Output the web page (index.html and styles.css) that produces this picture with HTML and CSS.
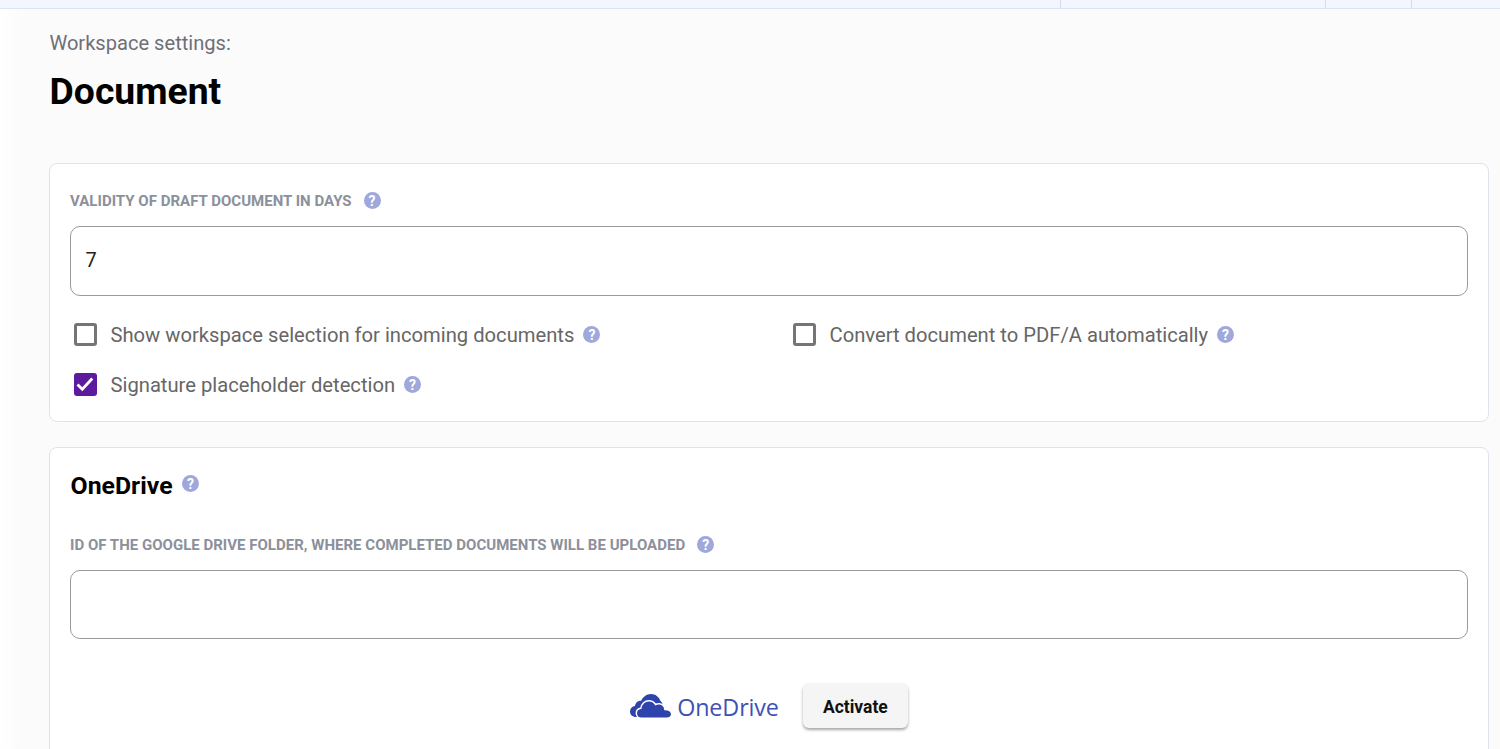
FILE: index.html
```html
<!DOCTYPE html>
<html lang="en">
<head>
<meta charset="utf-8">
<title>Workspace settings: Document</title>
<link rel="stylesheet" href="styles.css">
</head>
<body>
<header class="topbar">
  <div class="topbar-fill"></div>
  <div class="topbar-cell topbar-wide"></div>
  <div class="topbar-cell topbar-narrow"></div>
  <div class="topbar-cell topbar-end"></div>
</header>
<main class="page">
  <p class="eyebrow">Workspace settings:</p>
  <h1 class="title">Document</h1>

  <section class="card card-general">
    <div class="field-label"><span>VALIDITY OF DRAFT DOCUMENT IN DAYS</span><span class="help">?</span></div>
    <div class="input input-days">7</div>
    <div class="options">
      <div class="option"><span class="check"></span><span class="option-text">Show workspace selection for incoming documents</span><span class="help">?</span></div>
      <div class="option"><span class="check"></span><span class="option-text">Convert document to PDF/A automatically</span><span class="help">?</span></div>
      <div class="option">
        <span class="check check-on"><svg viewBox="0 0 23 23" width="23" height="23"><path d="M3.500 11.500l4.800 4.800 10-10.800" fill="none" stroke="#fff" stroke-width="2.800"/></svg></span>
        <span class="option-text">Signature placeholder detection</span><span class="help">?</span>
      </div>
    </div>
  </section>

  <section class="card card-drive">
    <div class="card-heading"><h2 class="card-title">OneDrive</h2><span class="help help-raised">?</span></div>
    <div class="field-label"><span>ID OF THE GOOGLE DRIVE FOLDER, WHERE COMPLETED DOCUMENTS WILL BE UPLOADED</span><span class="help">?</span></div>
    <div class="input input-folder"></div>
    <div class="activate-row">
      <div class="logo">
        <svg class="logo-cloud" viewBox="0 0 42 25" width="42" height="25">
          <path fill="#2f43ad" d="M6 23c-3.400 0-6-2.300-6-5.500 0-2.900 2.100-5 5-5.400C5.300 8.700 8 6.500 11.200 6.800 13 2.800 16.500 0 21 0c4.500 0 8 2.800 9.300 6.800 1.500 1 2.500 3 2.500 5L20 23z"/>
          <path fill="#2f43ad" stroke="#fff" stroke-width="1.500" d="M11.500 24.300c-2.900 0-5.200-2.200-5.200-5 0-2.600 1.900-4.700 4.500-5 .4-4.300 3.800-7.500 8-7.500 2.800 0 5.300 1.400 6.800 3.700 1.200-.7 2.500-.9 3.800-.7 3 .4 5.200 2.700 5.500 5.600 3.600-.2 6.800 1.800 6.800 4.700 0 2.500-2 4.200-5 4.200z"/>
        </svg>
        <span class="logo-text">OneDrive</span>
      </div>
      <button class="activate" type="button">Activate</button>
    </div>
  </section>
</main>
</body>
</html>
```
FILE: styles.css
```css
* { box-sizing: border-box; }
html, body { margin: 0; height: 749px; overflow: hidden; }
body {
  background: linear-gradient(90deg, #ffffff 0, #fbfbfb 24px);
  font-family: Roboto, "Liberation Sans", sans-serif;
}
.topbar {
  display: flex;
  height: 9px;
  background: #f3f6fe;
  border-bottom: 1px solid #dbe3f6;
}
.topbar-fill { width: 1060px; }
.topbar-cell { border-left: 1px solid #d8dce8; }
.topbar-wide { width: 265px; }
.topbar-narrow { width: 86px; }
.topbar-end { flex: 1; }
.page { padding: 0 11px 0 49px; }
.eyebrow {
  margin: 0;
  padding: 23px 0 0 .4px;
  font-size: 20.100px;
  line-height: 22px;
  color: #6f6f78;
}
.title {
  margin: 15px 0 0;
  padding-left: .6px;
  font-size: 37.300px;
  line-height: 44px;
  font-weight: 700;
  color: #000;
}
.card {
  background: #fff;
  border: 1px solid #dfe3f0;
  border-radius: 8px;
  padding: 0 20px;
}
.card-general { margin-top: 50px; height: 259px; padding-top: 26px; }
.card-drive { margin-top: 25px; height: 320px; padding-top: 22px; }
.field-label {
  display: flex;
  align-items: center;
  gap: 12px;
  height: 20px;
  padding-top: 1px;
  font-size: 15px;
  font-weight: 700;
  color: #8c909b;
  letter-spacing: .014px;
}
.help {
  display: inline-flex;
  align-items: center;
  justify-content: center;
  flex: none;
  width: 17px;
  height: 17px;
  border-radius: 50%;
  background: #9fa8da;
  color: #fff;
  font-size: 14px;
  font-weight: 700;
  line-height: 1;
}
.input {
  border: 1px solid #9a9a9a;
  border-radius: 10px;
  background: #fff;
  padding: 0 14px 2px 14.600px;
  color: #212121;
  font-size: 20px;
  display: flex;
  align-items: center;
}
.input-days { margin-top: 16px; height: 70px; }
.input-folder { margin-top: 16px; height: 69px; }
.options {
  display: grid;
  grid-template-columns: 719px 1fr;
  row-gap: 27px;
  margin-top: 27px;
  padding-left: 4px;
}
.option {
  display: flex;
  align-items: center;
  height: 23px;
}
.check {
  flex: none;
  width: 23px;
  height: 23px;
  border: 3px solid #757575;
  border-radius: 3px;
  margin-right: 13.500px;
}
.check-on {
  border: 0;
  background: #5c1a9e;
  display: flex;
}
.option-text {
  font-size: 20.200px;
  color: #666;
  margin-right: 9px;
}
.card-heading {
  display: flex;
  align-items: flex-start;
  gap: 9.500px;
  height: 30px;
  padding: 1px 0 0 .6px;
}
.card-title {
  margin: 0;
  font-size: 24.800px;
  line-height: 30px;
  font-weight: 700;
  color: #000;
}
.help-raised { margin-top: 4px; }
.card-drive .field-label { margin-top: 34px; }
.activate-row {
  display: flex;
  align-items: center;
  justify-content: center;
  gap: 24px;
  margin-top: 44px;
}
.logo { display: flex; align-items: center; gap: 5px; margin-top: 2px; }
.logo-cloud { display: block; }
.logo-text {
  font-family: "Open Sans", sans-serif;
  font-size: 23.300px;
  line-height: 30px;
  letter-spacing: -.1px;
  color: #3f51b5;
}
.activate {
  width: 105px;
  height: 45px;
  border: 0;
  border-radius: 6px;
  padding: 2px 0 0;
  background: #f5f5f5;
  font-family: Roboto, sans-serif;
  font-size: 17.500px;
  font-weight: 700;
  color: #111;
  box-shadow: 0 2px 3px rgba(0,0,0,.35);
}
```
